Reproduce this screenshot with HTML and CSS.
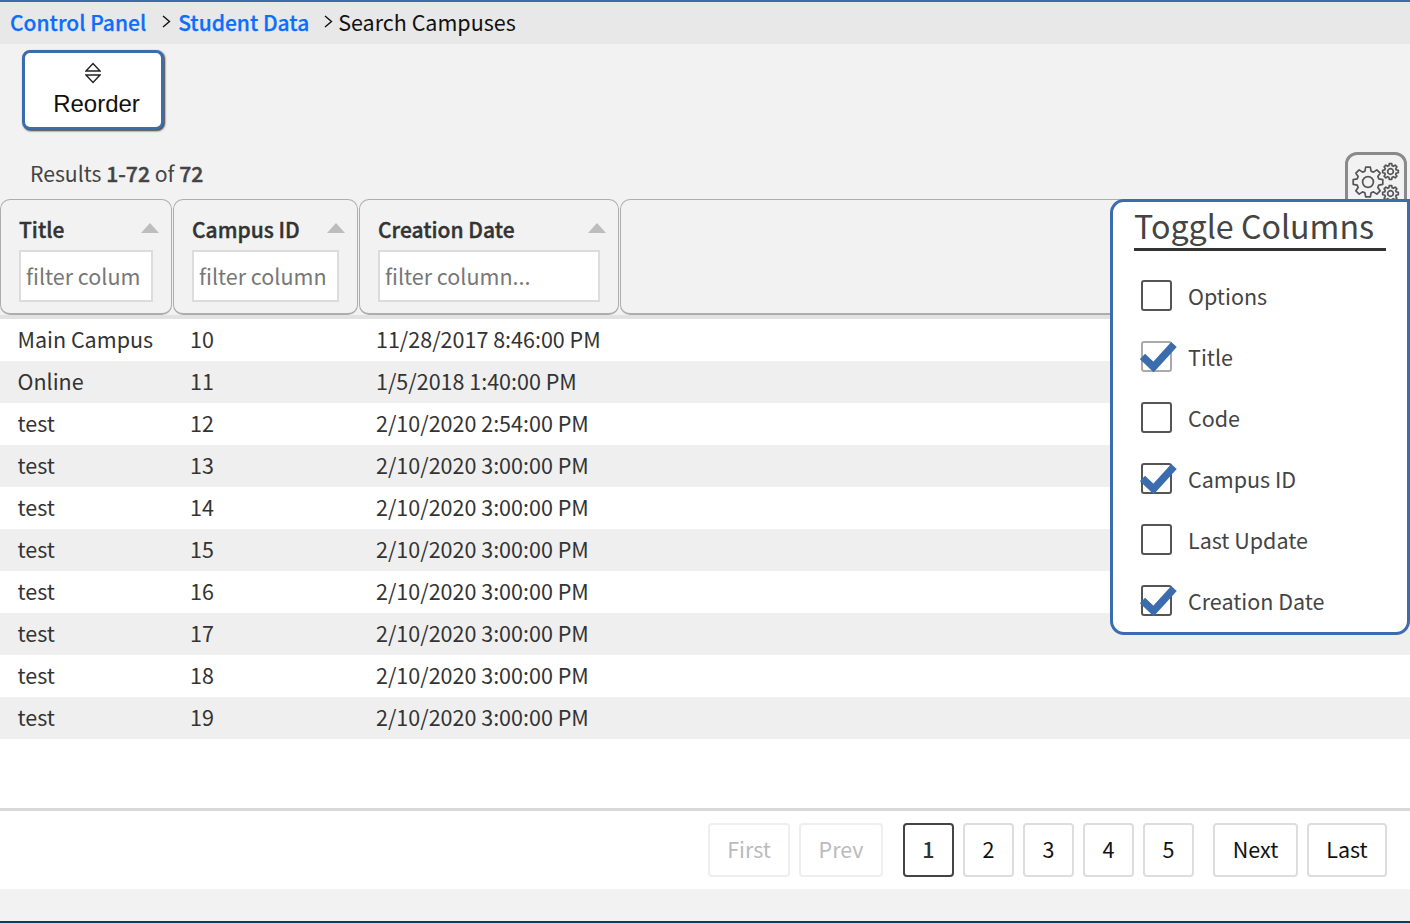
FILE: index.html
```html
<!DOCTYPE html>
<html lang="en">
<head>
<meta charset="utf-8">
<title>Search Campuses</title>
<link rel="stylesheet" href="styles.css">
</head>
<body>
<svg class="defs" width="0" height="0" aria-hidden="true">
  <symbol id="gear" viewBox="-12 -12 24 24">
    <path d="M-2.07-7.21-1.56-9.88 1.56-9.88 2.07-7.21 3.64-6.56 5.88-8.09 8.09-5.88 6.56-3.64 7.21-2.07 9.88-1.56 9.88 1.56 7.21 2.07 6.56 3.64 8.09 5.88 5.88 8.09 3.64 6.56 2.07 7.21 1.56 9.88-1.56 9.88-2.07 7.21-3.64 6.56-5.88 8.09-8.09 5.88-6.56 3.64-7.21 2.07-9.88 1.56-9.88-1.56-7.21-2.07-6.56-3.64-8.09-5.88-5.88-8.09-3.64-6.56Z" fill="none" stroke="currentColor" stroke-width="1.7" stroke-linejoin="round" vector-effect="non-scaling-stroke"/>
    <circle r="3.6" fill="none" stroke="currentColor" stroke-width="1.7" vector-effect="non-scaling-stroke"/>
  </symbol>
  <symbol id="check" viewBox="0 0 38 32">
    <path d="M2.500 16.500 13.500 27 34 4.500" fill="none" stroke="#3b6cad" stroke-width="7.500"/>
  </symbol>
  <symbol id="chev" viewBox="0 0 9 13">
    <path d="M1 1 7.500 6.500 1 12" fill="none" stroke="#111" stroke-width="1.400"/>
  </symbol>
</svg>
<div class="page">
  <nav class="crumbs">
    <a class="crumb-link" href="#">Control Panel</a>
    <svg class="chev chev-first"><use href="#chev"/></svg>
    <a class="crumb-link" href="#">Student Data</a>
    <svg class="chev chev-second"><use href="#chev"/></svg>
    <span class="crumb-current">Search Campuses</span>
  </nav>

  <div class="toolbar">
    <button class="reorder" type="button">
      <svg class="reorder-icon" width="16" height="22" viewBox="0 0 16 22" aria-hidden="true">
        <path d="M1 9 8 1.500 15 9ZM1 13 8 20.500 15 13Z" fill="none" stroke="#222" stroke-width="1.400"/>
      </svg>
      <span class="reorder-label">Reorder</span>
    </button>
  </div>

  <div class="results-bar">
    <div class="results">Results <b>1-72</b> of <b>72</b></div>
    <button class="gear-button" type="button" aria-label="Toggle columns">
      <svg class="gear-big"><use href="#gear"/></svg>
      <svg class="gear-small gear-a"><use href="#gear"/></svg>
      <svg class="gear-small gear-b"><use href="#gear"/></svg>
    </button>
  </div>

  <div class="table-area">
    <div class="head">
      <div class="head-cell col-title">
        <div class="head-top"><span>Title</span><i class="sort"></i></div>
        <input class="filter" placeholder="filter column..." aria-label="Filter title">
      </div>
      <div class="head-cell col-id">
        <div class="head-top"><span>Campus ID</span><i class="sort"></i></div>
        <input class="filter" placeholder="filter column..." aria-label="Filter campus id">
      </div>
      <div class="head-cell col-date">
        <div class="head-top"><span>Creation Date</span><i class="sort"></i></div>
        <input class="filter" placeholder="filter column..." aria-label="Filter creation date">
      </div>
      <div class="head-cell col-rest"></div>
    </div>

    <div class="rows">
      <div class="row"><span>Main Campus</span><span>10</span><span>11/28/2017 8:46:00 PM</span></div>
      <div class="row"><span>Online</span><span>11</span><span>1/5/2018 1:40:00 PM</span></div>
      <div class="row"><span>test</span><span>12</span><span>2/10/2020 2:54:00 PM</span></div>
      <div class="row"><span>test</span><span>13</span><span>2/10/2020 3:00:00 PM</span></div>
      <div class="row"><span>test</span><span>14</span><span>2/10/2020 3:00:00 PM</span></div>
      <div class="row"><span>test</span><span>15</span><span>2/10/2020 3:00:00 PM</span></div>
      <div class="row"><span>test</span><span>16</span><span>2/10/2020 3:00:00 PM</span></div>
      <div class="row"><span>test</span><span>17</span><span>2/10/2020 3:00:00 PM</span></div>
      <div class="row"><span>test</span><span>18</span><span>2/10/2020 3:00:00 PM</span></div>
      <div class="row"><span>test</span><span>19</span><span>2/10/2020 3:00:00 PM</span></div>
    </div>

    <aside class="panel">
      <h2 class="panel-title"><span>Toggle Columns</span></h2>
      <ul class="toggles">
        <li class="toggle"><span class="box"></span>Options</li>
        <li class="toggle"><span class="box box-hover"><svg class="tick"><use href="#check"/></svg></span>Title</li>
        <li class="toggle"><span class="box"></span>Code</li>
        <li class="toggle"><span class="box"><svg class="tick"><use href="#check"/></svg></span>Campus ID</li>
        <li class="toggle"><span class="box"></span>Last Update</li>
        <li class="toggle"><span class="box"><svg class="tick"><use href="#check"/></svg></span>Creation Date</li>
      </ul>
    </aside>
  </div>

  <div class="pager">
    <a class="pg pg-first off">First</a>
    <a class="pg pg-prev off">Prev</a>
    <a class="pg pg-num on">1</a>
    <a class="pg pg-num">2</a>
    <a class="pg pg-num">3</a>
    <a class="pg pg-num">4</a>
    <a class="pg pg-num">5</a>
    <a class="pg pg-next">Next</a>
    <a class="pg pg-last">Last</a>
  </div>
  <div class="foot"></div>
</div>
</body>
</html>
```
FILE: styles.css
```css
* { box-sizing: border-box; }
html, body { margin: 0; padding: 0; }
body {
  font-family: "Noto Sans CJK SC", "Noto Sans", sans-serif;
  font-size: 21.5px;
  color: #333;
  background: #f2f2f2;
  overflow: hidden;
}
.defs { position: absolute; }
.page {
  width: 1410px;
  height: 923px;
  display: flex;
  flex-direction: column;
  border-top: 2px solid #3b6cad;
  border-bottom: 2px solid #123a5c;
}

.crumbs {
  height: 42px;
  background: #e8e8e8;
  display: flex;
  align-items: center;
  padding: 0 0 2px 10px;
  line-height: 40px;
  color: #111;
}
.crumb-link {
  color: #0d6efd;
  text-decoration: none;
  font-weight: 500;
  font-size: 21px;
  -webkit-text-stroke: 0.25px #0d6efd;
}
.chev { width: 9px; height: 13px; flex: none; margin-bottom: 1px; }
.chev-first { margin-left: 16px; margin-right: 7px; }
.chev-second { margin-left: 15px; margin-right: 5px; }

.toolbar { height: 108px; padding: 6px 0 0 22px; }
.reorder {
  width: 142px;
  height: 80px;
  background: #fff;
  border: 3px solid #3b6cad;
  border-radius: 8px;
  box-shadow: 1px 1px 2px #333;
  padding: 9px 0 0;
  display: flex;
  flex-direction: column;
  align-items: center;
  font-family: "Liberation Sans", Arial, sans-serif;
  font-size: 24px;
  color: #111;
}
.reorder-icon { display: block; }
.reorder-label { display: block; line-height: 27px; margin: 6px 0 0 7px; }

.results-bar {
  height: 47px;
  display: flex;
  justify-content: space-between;
  padding: 0 3px 0 30px;
}
.results { line-height: 42px; color: #444; font-size: 21.2px; }
.results b { font-weight: 500; -webkit-text-stroke: 0.4px #444; }
.gear-button {
  position: relative;
  width: 62px;
  height: 62px;
  background: #f2f2f2;
  border: 3px solid #8a8a8a;
  border-radius: 12px;
  padding: 0;
  color: #555;
}
.gear-big { position: absolute; left: 2px; top: 9px; width: 36px; height: 36px; }
.gear-small { position: absolute; width: 19px; height: 19px; left: 33px; }
.gear-a { top: 7px; }
.gear-b { top: 29px; }

.table-area {
  position: relative;
  height: 609px;
  background: #fff;
  display: flex;
  flex-direction: column;
}
.head {
  height: 120px;
  flex: none;
  display: flex;
  gap: 1px;
  background: #f2f2f2;
  border-bottom: 4px solid #e2e2e2;
}
.head-cell {
  height: 116px;
  border: 1px solid #adadad;
  border-bottom-width: 2px;
  border-radius: 10px;
  padding: 0 18px;
  background: #f2f2f2;
}
.col-title { width: 172px; }
.col-id { width: 185px; }
.col-date { width: 260px; }
.col-rest { flex: 1; }
.head-top {
  height: 50px;
  display: flex;
  justify-content: space-between;
  font-size: 21px;
  font-weight: 500;
  line-height: 58px;
  color: #333;
  -webkit-text-stroke: 0.4px #333;
}
.sort {
  width: 0;
  height: 0;
  margin: 23px -6px 0 0;
  border-left: 9px solid transparent;
  border-right: 9px solid transparent;
  border-bottom: 10px solid #bdbdbd;
}
.filter {
  display: block;
  width: 100%;
  height: 52px;
  border: 2px solid #dcdcdc;
  background: #fff;
  padding: 0 10px 2px 5px;
  font: inherit;
  font-size: 21.5px;
  line-height: 46px;
  color: #333;
  border-radius: 0;
}
.col-title .filter { width: 134px; }
.col-id .filter { width: 147px; }
.col-date .filter { width: 222px; }
.filter::placeholder { color: #777; opacity: 1; }

.rows { flex: none; }
.row {
  height: 42px;
  display: grid;
  grid-template-columns: 172.500px 186px 1fr;
  padding-left: 17.500px;
  line-height: 40px;
  color: #333;
  background: #fff;
}
.row:nth-child(even) { background: #efefef; }

.panel {
  position: absolute;
  top: 0;
  left: 1110px;
  width: 300px;
  height: 436px;
  background: #fff;
  border: 3px solid #3b6cad;
  border-radius: 14px;
  border-top-right-radius: 0;
  z-index: 2;
}
.panel-title {
  margin: 0 21px 0 21px;
  height: 49px;
  border-bottom: 3px solid #333;
  font-size: 32.2px;
  font-weight: 400;
  line-height: 46px;
  color: #444;
  white-space: nowrap;
}
.toggles { list-style: none; margin: 14px 0 0; padding: 0 0 0 28px; }
.toggle {
  height: 61px;
  display: flex;
  align-items: center;
  gap: 16px;
  color: #444;
}
.box {
  position: relative;
  flex: none;
  width: 31px;
  height: 31px;
  border: 2.500px solid #555;
  border-radius: 3px;
  background: #fff;
}
.box-hover { border-color: #aaa; }
.tick { position: absolute; left: -3px; top: -3px; width: 38px; height: 32px; overflow: visible; }

.pager {
  height: 81px;
  background: #fff;
  border-top: 3px solid #d9d9d9;
  display: flex;
  justify-content: flex-end;
  padding: 12px 23px 0 0;
  gap: 9px;
}
.pg {
  height: 54px;
  border: 2px solid #ddd;
  border-radius: 4px;
  padding-bottom: 4px;
  display: flex;
  align-items: center;
  justify-content: center;
  color: #111;
}
.pg-first { width: 82px; }
.pg-prev { width: 84px; margin-right: 11px; }
.pg-num { width: 51px; }
.pg-next { width: 85px; margin-left: 10px; }
.pg-last { width: 80px; }
.off { color: #bbb; border-color: #eee; }
.on { border-color: #444; font-weight: 500; color: #333; }

.foot { flex: 1; background: #f2f2f2; }
```
